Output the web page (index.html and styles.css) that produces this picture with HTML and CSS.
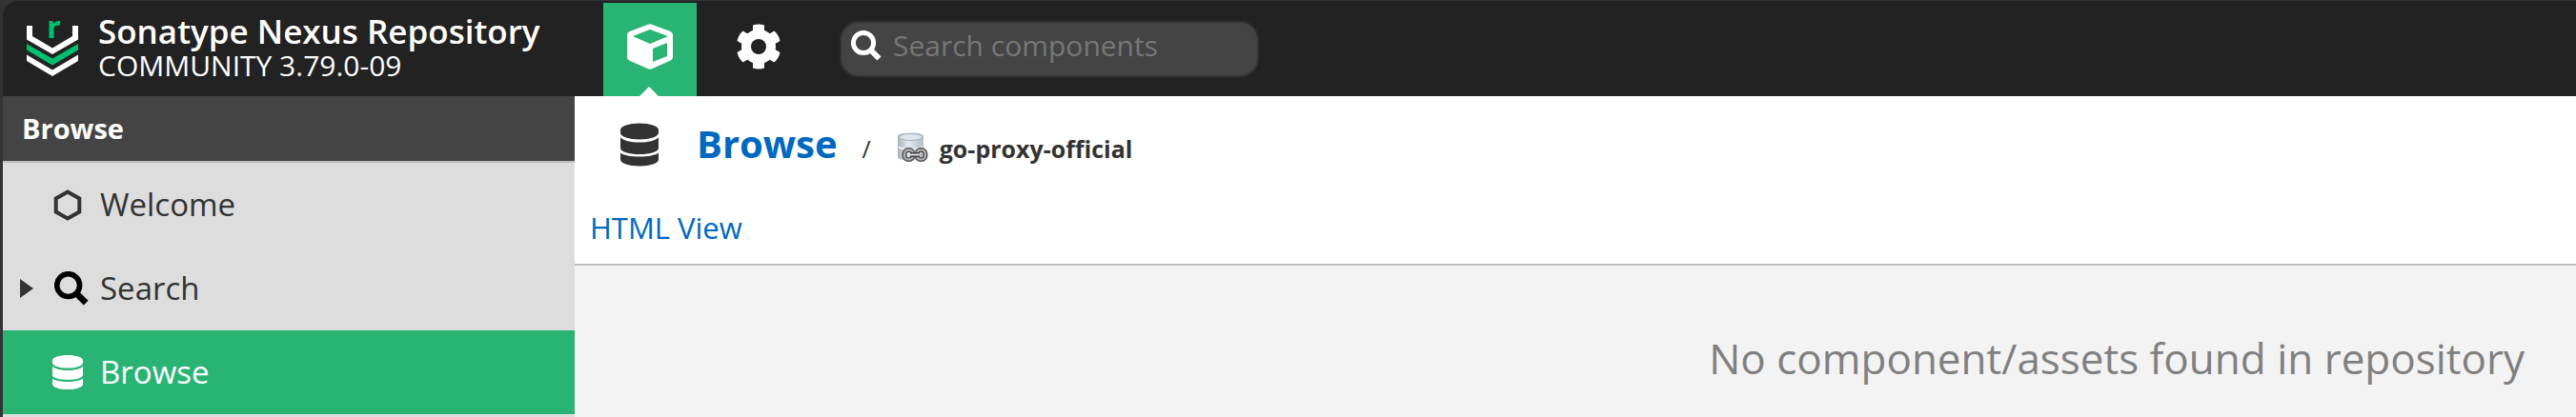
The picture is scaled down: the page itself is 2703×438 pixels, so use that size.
FILE: index.html
```
<!DOCTYPE html>
<html lang="en">
<head>
<meta charset="utf-8">
<title>Browse - Sonatype Nexus Repository</title>
<link rel="stylesheet" href="styles.css">
</head>
<body>
<svg class="defs" aria-hidden="true">
  <symbol id="database" viewBox="0 0 40 45">
    <path d="M0 7C0 3 9 0 20 0S40 3 40 7V10C40 14 31 17 20 17S0 14 0 10Z"/>
    <path d="M0 15C3 18 11 20 20 20S37 18 40 15V26C40 30 31 32.500 20 32.500S0 30 0 26Z"/>
    <path d="M0 31C3 33.500 11 35 20 35S37 33.500 40 31V38C40 42 31 45 20 45S0 42 0 38Z"/>
  </symbol>
  <symbol id="magnifier" viewBox="0 0 32 32">
    <circle cx="13" cy="13" r="10.600" fill="none" stroke="currentColor" stroke-width="5"/>
    <path d="M21 21L29.500 29.500" fill="none" stroke="currentColor" stroke-width="6"/>
  </symbol>
</svg>
<div class="app">
  <header class="topbar">
    <div class="brand">
      <svg class="logo" viewBox="0 0 54 58" role="img" aria-label="Nexus Repository logo">
        <path fill="#fff" d="M0 5H6V16L27 28.500L48 16V5H54V19.500L27 35L0 19.500Z"/>
        <path fill="#00bf6f" d="M0 24L27 39.500L54 24V30.500L27 46.500L0 30.500Z"/>
        <path fill="#fff" d="M0 35.500L27 51.500L54 35.500V42L27 58L0 42Z"/>
        <text class="logo-letter" x="21" y="18">r</text>
      </svg>
      <div class="brand-text">
        <div class="product">Sonatype Nexus Repository</div>
        <div class="version">COMMUNITY 3.79.0-09</div>
      </div>
    </div>
    <nav class="modes">
      <button class="mode mode-active" type="button" aria-label="Browse">
        <svg width="48" height="48" viewBox="0 0 48 48"><path fill="#fff" fill-rule="evenodd" d="M22 .700Q24 0 26 .700L45.500 8Q48 9 48 11.500V35Q48 37.500 45.800 38.500L26 47.200Q24 48 22 47.200L2.200 38.500Q0 37.500 0 35V11.500Q0 9 2.500 8ZM24 6L6 13L24 21L43 13ZM27 26V40L42 34V20Z"/></svg>
      </button>
      <button class="mode" type="button" aria-label="Administration">
        <svg width="48" height="48" viewBox="-24 -24 48 48">
          <g fill="#fff">
            <circle r="18"/>
            <path id="teeth" d="M-6 -15V-22.500Q0 -24.500 6 -22.500V-15L8 0L6 15V22.500Q0 24.500 -6 22.500V15L-8 0Z"/>
            <use href="#teeth" transform="rotate(60)"/>
            <use href="#teeth" transform="rotate(120)"/>
          </g>
          <circle r="8" fill="#222"/>
        </svg>
      </button>
    </nav>
    <label class="search">
      <svg width="32" height="32"><use href="#magnifier"/></svg>
      <input type="text" placeholder="Search components" aria-label="Search components">
    </label>
  </header>
  <div class="columns">
    <aside class="sidebar">
      <h2 class="sidebar-title">Browse</h2>
      <ul class="menu">
        <li><a class="item" href="#welcome">
          <span></span>
          <svg width="32" height="34" viewBox="0 0 32 34"><path fill="none" stroke="#333" stroke-width="4" d="M16 3.500L28.300 10.500V24.500L16 31.500L3.700 24.500V10.500Z"/></svg>
          <span>Welcome</span></a></li>
        <li><a class="item" href="#search">
          <svg width="14" height="20" viewBox="0 0 14 20"><path fill="#333" d="M0 0L14 10L0 20Z"/></svg>
          <svg class="black" width="36" height="36"><use href="#magnifier"/></svg>
          <span>Search</span></a></li>
        <li><a class="item item-active" href="#browse">
          <span></span>
          <svg width="32" height="36" fill="#fff"><use href="#database"/></svg>
          <span>Browse</span></a></li>
      </ul>
    </aside>
    <main class="content">
      <div class="crumbs">
        <svg class="crumb-icon" width="40" height="46" fill="#333"><use href="#database"/></svg>
        <h1 class="crumb-root"><a href="#browse">Browse</a></h1>
        <span class="slash">/</span>
        <svg class="repo-icon" width="32" height="32" viewBox="0 0 32 32">
          <defs>
            <linearGradient id="steel"><stop offset="0" stop-color="#a9b2ba"/><stop offset=".4" stop-color="#e3e9ef"/><stop offset="1" stop-color="#b4bec8"/></linearGradient>
          </defs>
          <path fill="url(#steel)" d="M0 4C0 -1 27 -1 27 4V26C27 31 0 31 0 26Z"/>
          <ellipse cx="13.500" cy="5" rx="12" ry="3.500" fill="#dde5ed" stroke="#a4aeb8"/>
          <path fill="none" stroke="#f3f6f9" stroke-width="1.500" d="M1 15C4 19 23 19 26 15"/>
          <g fill="none">
            <rect x="7" y="18.500" width="9" height="10" rx="4" stroke="#555" stroke-width="5"/>
            <rect x="20" y="18.500" width="9" height="10" rx="4" stroke="#555" stroke-width="5"/>
            <rect x="7" y="18.500" width="9" height="10" rx="4" stroke="#b5b5b5" stroke-width="2"/>
            <rect x="20" y="18.500" width="9" height="10" rx="4" stroke="#b5b5b5" stroke-width="2"/>
            <path stroke="#444" stroke-width="5" d="M13 23.500H23"/>
            <path stroke="#ddd" stroke-width="2" d="M13 23.500H23"/>
          </g>
        </svg>
        <span class="repo">go-proxy-official</span>
      </div>
      <div class="toolbar"><a href="#html">HTML View</a></div>
      <p class="empty">No component/assets found in repository</p>
    </main>
  </div>
</div>
</body>
</html>
```

FILE: styles.css
```
* {
  box-sizing: border-box;
}

body {
  margin: 0;
  background: #333;
  color: #333;
  font-family: "Open Sans", "Noto Sans", sans-serif;
}

a {
  color: #0068bf;
  text-decoration: none;
}

svg {
  display: block;
  flex: none;
}

.defs {
  position: absolute;
  width: 0;
  height: 0;
}

.app {
  display: flex;
  flex-direction: column;
  min-height: 100vh;
  padding: 1px 0 0 3px;
}

.topbar {
  display: flex;
  align-items: center;
  height: 100px;
  background: #222;
  border-top-left-radius: 16px;
  color: #fff;
}

.brand {
  display: flex;
  align-items: center;
  gap: 21px;
  width: 630px;
  padding-left: 25px;
}

.logo {
  width: 54px;
  height: 58px;
  overflow: visible;
}

.logo-letter {
  fill: #00bf6f;
  font-size: 33px;
  font-weight: 700;
}

.brand-text {
  line-height: 36px;
  white-space: nowrap;
}

.product {
  font-size: 35px;
  font-weight: 600;
}

.version {
  font-size: 30px;
}

.modes {
  display: flex;
  align-self: flex-end;
  gap: 16px;
}

.mode {
  position: relative;
  display: flex;
  align-items: center;
  justify-content: center;
  width: 98px;
  height: 98px;
  padding: 0 0 6px;
  border: 0;
  background: none;
}

.mode-active {
  background: #2ab474;
}

.mode-active::after {
  content: "";
  position: absolute;
  bottom: 0;
  left: 38px;
  border: 10px solid transparent;
  border-top: 0;
  border-bottom-color: #fff;
}

.search {
  display: flex;
  align-items: center;
  gap: 12px;
  width: 440px;
  height: 59px;
  margin-left: 36px;
  padding: 0 20px 7px 10px;
  border: 2px solid #333;
  border-radius: 20px;
  background: #444;
}

.search input {
  flex: 1;
  min-width: 0;
  padding: 0;
  border: 0;
  outline: 0;
  background: none;
  color: #fff;
  font: 30px "Open Sans", "Noto Sans", sans-serif;
}

.search input::placeholder {
  color: #777;
}

.columns {
  display: flex;
  flex: 1;
}

.sidebar {
  flex: none;
  width: 600px;
  background: #ddd;
}

.sidebar-title {
  margin: 0;
  padding-left: 20px;
  border-bottom: 2px solid #bfbfbf;
  background: #444;
  color: #fff;
  font-size: 29px;
  line-height: 68px;
}

.menu {
  margin: 0;
  padding: 0;
  list-style: none;
}

.item {
  display: grid;
  grid-template-columns: 34px 50px 1fr;
  align-items: center;
  height: 88px;
  padding-left: 18px;
  color: #333;
  font-size: 33px;
  line-height: 88px;
}

.black {
  color: #000;
  margin-left: 2px;
}

.item-active {
  background: #2ab474;
  color: #fff;
}

.content {
  flex: 1;
  min-width: 0;
  background: #f3f3f3;
}

.crumbs {
  display: flex;
  align-items: baseline;
  height: 100px;
  padding-left: 48px;
  background: #fff;
  line-height: 100px;
  white-space: nowrap;
}

.crumb-icon {
  align-self: center;
  margin: 2px 40px 0 0;
}

.crumb-root {
  margin: 0 26px 0 0;
  font-size: 40px;
}

.slash {
  font-size: 25px;
}

.repo-icon {
  align-self: center;
  margin: 8px 12px 0 28px;
}

.repo {
  font-size: 25px;
  font-weight: 700;
}

.toolbar {
  padding-left: 16px;
  border-bottom: 2px solid #bfbfbf;
  background: #fff;
  font-size: 31px;
  line-height: 76px;
}

.empty {
  margin: 0;
  padding: 67px 54px 0 0;
  color: #808080;
  font-size: 44px;
  line-height: 60px;
  text-align: right;
}
```
